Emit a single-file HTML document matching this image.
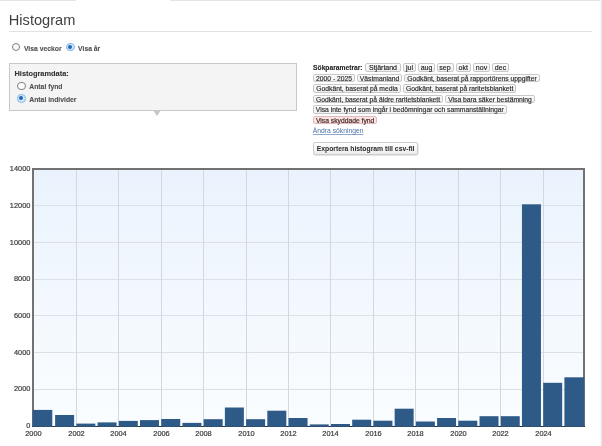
<!DOCTYPE html>
<html><head><meta charset="utf-8">
<style>
html,body{margin:0;padding:0;background:#fff;width:602px;height:446px;overflow:hidden;}
body{position:relative;will-change:transform;font-family:"Liberation Sans",sans-serif;}
.topl{position:absolute;top:0;height:1px;background:#e4e4e4;}
.rline{position:absolute;left:600px;top:0;width:2px;height:446px;background:linear-gradient(90deg,#f8f8f8 50%,#e8e8e8 50%);}
h1{position:absolute;left:8.8px;top:10.6px;margin:0;font-weight:normal;font-size:14.6px;color:#404040;line-height:18px;}
.hr{position:absolute;left:9px;top:31px;width:583px;height:1px;background:#e2e2e2;}
.radio{position:absolute;width:8.6px;height:8.6px;box-sizing:border-box;border:1.2px solid #7e7e7e;border-radius:50%;background:#fbfdff;}
.radio.on{border-color:#86b6e4;background:#d2e8fa;}
.radio.on::after{content:"";position:absolute;left:1px;top:1px;width:4.4px;height:4.4px;border-radius:50%;background:#1f66b3;}
.lbl{position:absolute;font-size:6.8px;font-weight:bold;color:#505050;line-height:8px;white-space:nowrap;-webkit-text-stroke:0.1px currentColor;}
.box{position:absolute;left:9px;top:63px;width:288px;height:48px;box-sizing:border-box;background:#f4f4f4;border:1px solid #c8c8c8;}
.arrow{position:absolute;left:152.8px;top:110.4px;width:0;height:0;border-left:4.8px solid transparent;border-right:4.8px solid transparent;border-top:6px solid #c6c6c6;}
.tag{position:absolute;box-sizing:border-box;font-size:6.75px;color:#2a2a2a;line-height:7px;border:1px solid #c8c8c8;border-radius:2px;background:linear-gradient(#fcfcfc,#f0f0f0);white-space:nowrap;text-align:center;-webkit-text-stroke:0.15px #2a2a2a;}
.r1{top:62.6px;height:9.1px;color:#1a1a1a;font-size:7px;}
.r2{top:73.7px;height:8.7px;}
.r3{top:83.9px;height:9.1px;}
.r4{top:94.5px;height:8.8px;}
.r5{top:105.3px;height:8.7px;}
.r6{top:115.9px;height:8px;}
.tag.pink{background:#fbe3e3;border-color:#e2b9b9;color:#3a1c1c;-webkit-text-stroke:0.15px #3a1c1c;}
.link{position:absolute;left:312.8px;top:127px;font-size:6.75px;color:#4d72aa;text-decoration:underline;text-decoration-color:#8ea9d0;text-decoration-thickness:0.7px;text-underline-offset:0.8px;white-space:nowrap;line-height:8px;}
.btn{position:absolute;left:313px;top:142.3px;width:105.2px;height:12.4px;box-sizing:border-box;border:1px solid #cdcdcd;border-radius:2px;background:linear-gradient(#ffffff,#ececec);box-shadow:0.4px 0.6px 0.6px rgba(0,0,0,0.2);font-size:6.8px;font-weight:bold;color:#2a2a2a;line-height:11.8px;text-align:center;white-space:nowrap;}
svg.chart{position:absolute;left:0;top:0;}
svg.chart text{font-family:"Liberation Sans",sans-serif;font-size:7.4px;fill:#3a3a3a;stroke:#3a3a3a;stroke-width:0.2px;}
</style></head><body>
<div class="topl" style="left:0;width:76px"></div>
<div class="topl" style="left:170px;width:431px"></div>
<div class="rline"></div>
<h1>Histogram</h1>
<div class="hr"></div>

<div class="radio" style="left:11.6px;top:42.5px"></div>
<div class="lbl" style="left:23.9px;top:44.5px">Visa veckor</div>
<div class="radio on" style="left:66.1px;top:42.5px"></div>
<div class="lbl" style="left:78.1px;top:44.5px">Visa år</div>

<div class="box"></div>
<div class="arrow"></div>
<div class="lbl" style="left:14.5px;top:70px;color:#333;font-size:7.4px">Histogramdata:</div>
<div class="radio" style="left:17px;top:81.5px"></div>
<div class="lbl" style="left:29.3px;top:83px">Antal fynd</div>
<div class="radio on" style="left:17px;top:94px"></div>
<div class="lbl" style="left:29.3px;top:95.5px">Antal individer</div>

<div class="lbl" style="left:313.1px;top:63.6px;color:#222;font-size:6.7px">Sökparametrar:</div>
<div class="tag r1" style="left:365px;width:36px">Stjärtand</div>
<div class="tag r1" style="left:403px;width:13px">jul</div>
<div class="tag r1" style="left:418px;width:17px">aug</div>
<div class="tag r1" style="left:436.5px;width:17px">sep</div>
<div class="tag r1" style="left:455.5px;width:15.5px">okt</div>
<div class="tag r1" style="left:473px;width:17px">nov</div>
<div class="tag r1" style="left:492px;width:17px">dec</div>

<div class="tag r2" style="left:313px;width:42px">2000 - 2025</div>
<div class="tag r2" style="left:357px;width:45px">Västmanland</div>
<div class="tag r2" style="left:404px;width:136px">Godkänt, baserat på rapportörens uppgifter</div>

<div class="tag r3" style="left:313px;width:88px">Godkänt, baserat på media</div>
<div class="tag r3" style="left:403.2px;width:113px">Godkänt, baserat på raritetsblankett</div>

<div class="tag r4" style="left:313px;width:130px">Godkänt, baserat på äldre raritetsblankett</div>
<div class="tag r4" style="left:445px;width:90px">Visa bara säker bestämning</div>

<div class="tag r5" style="left:313px;width:193.5px">Visa inte fynd som ingår i bedömningar och sammanställningar</div>
<div class="tag r6 pink" style="left:312.8px;width:64.6px">Visa skyddade fynd</div>
<div class="link">Ändra sökningen</div>
<div class="btn">Exportera histogram till csv-fil</div>
<svg class="chart" width="602" height="446" viewBox="0 0 602 446"><defs><linearGradient id="bg" x1="0" y1="0" x2="0" y2="1"><stop offset="0" stop-color="#eaf3fd"/><stop offset="1" stop-color="#fafdff"/></linearGradient></defs><rect x="33" y="169" width="551" height="257.5" fill="url(#bg)"/><line x1="34" y1="389.5" x2="583" y2="389.5" stroke="#dde1e7" stroke-width="1"/><line x1="34" y1="352.5" x2="583" y2="352.5" stroke="#dde1e7" stroke-width="1"/><line x1="34" y1="315.5" x2="583" y2="315.5" stroke="#dde1e7" stroke-width="1"/><line x1="34" y1="279.5" x2="583" y2="279.5" stroke="#dde1e7" stroke-width="1"/><line x1="34" y1="242.5" x2="583" y2="242.5" stroke="#dde1e7" stroke-width="1"/><line x1="34" y1="205.5" x2="583" y2="205.5" stroke="#dde1e7" stroke-width="1"/><line x1="76.5" y1="170" x2="76.5" y2="426" stroke="#d3d7de" stroke-width="1"/><line x1="118.5" y1="170" x2="118.5" y2="426" stroke="#d3d7de" stroke-width="1"/><line x1="161.5" y1="170" x2="161.5" y2="426" stroke="#d3d7de" stroke-width="1"/><line x1="203.5" y1="170" x2="203.5" y2="426" stroke="#d3d7de" stroke-width="1"/><line x1="246.5" y1="170" x2="246.5" y2="426" stroke="#d3d7de" stroke-width="1"/><line x1="288.5" y1="170" x2="288.5" y2="426" stroke="#d3d7de" stroke-width="1"/><line x1="330.5" y1="170" x2="330.5" y2="426" stroke="#d3d7de" stroke-width="1"/><line x1="373.5" y1="170" x2="373.5" y2="426" stroke="#d3d7de" stroke-width="1"/><line x1="415.5" y1="170" x2="415.5" y2="426" stroke="#d3d7de" stroke-width="1"/><line x1="458.5" y1="170" x2="458.5" y2="426" stroke="#d3d7de" stroke-width="1"/><line x1="500.5" y1="170" x2="500.5" y2="426" stroke="#d3d7de" stroke-width="1"/><line x1="543.5" y1="170" x2="543.5" y2="426" stroke="#d3d7de" stroke-width="1"/><path d="M33,426 L33,169 L584,169 L584,426" fill="none" stroke="#727272" stroke-width="2"/><line x1="32" y1="426.5" x2="585" y2="426.5" stroke="#2a2f36" stroke-width="1"/><rect x="32.60" y="409.9" width="19.70" height="16.90" fill="#2e5a88"/><rect x="55.12" y="415.0" width="19.00" height="11.80" fill="#2e5a88"/><rect x="76.34" y="423.6" width="19.00" height="3.20" fill="#2e5a88"/><rect x="97.56" y="422.4" width="19.00" height="4.40" fill="#2e5a88"/><rect x="118.78" y="420.9" width="19.00" height="5.90" fill="#2e5a88"/><rect x="140.00" y="420.1" width="19.00" height="6.70" fill="#2e5a88"/><rect x="161.22" y="419.0" width="19.00" height="7.80" fill="#2e5a88"/><rect x="182.44" y="422.9" width="19.00" height="3.90" fill="#2e5a88"/><rect x="203.66" y="419.2" width="19.00" height="7.60" fill="#2e5a88"/><rect x="224.88" y="407.5" width="19.00" height="19.30" fill="#2e5a88"/><rect x="246.10" y="419.2" width="19.00" height="7.60" fill="#2e5a88"/><rect x="267.32" y="410.7" width="19.00" height="16.10" fill="#2e5a88"/><rect x="288.54" y="418.0" width="19.00" height="8.80" fill="#2e5a88"/><rect x="309.76" y="424.40000000000003" width="19.00" height="2.40" fill="#2e5a88"/><rect x="330.98" y="424.0" width="19.00" height="2.80" fill="#2e5a88"/><rect x="352.20" y="419.7" width="19.00" height="7.10" fill="#2e5a88"/><rect x="373.42" y="420.7" width="19.00" height="6.10" fill="#2e5a88"/><rect x="394.64" y="408.7" width="19.00" height="18.10" fill="#2e5a88"/><rect x="415.86" y="421.5" width="19.00" height="5.30" fill="#2e5a88"/><rect x="437.08" y="418.0" width="19.00" height="8.80" fill="#2e5a88"/><rect x="458.30" y="420.7" width="19.00" height="6.10" fill="#2e5a88"/><rect x="479.52" y="416.2" width="19.00" height="10.60" fill="#2e5a88"/><rect x="500.74" y="416.2" width="19.00" height="10.60" fill="#2e5a88"/><rect x="521.96" y="204.3" width="19.00" height="222.50" fill="#2e5a88"/><rect x="543.18" y="382.8" width="19.00" height="44.00" fill="#2e5a88"/><rect x="564.40" y="377.3" width="19.80" height="49.50" fill="#2e5a88"/><text x="30.4" y="427.82" text-anchor="end">0</text><text x="30.4" y="391.20" text-anchor="end">2000</text><text x="30.4" y="354.58" text-anchor="end">4000</text><text x="30.4" y="317.96" text-anchor="end">6000</text><text x="30.4" y="281.34" text-anchor="end">8000</text><text x="30.4" y="244.72" text-anchor="end">10000</text><text x="30.4" y="208.10" text-anchor="end">12000</text><text x="30.4" y="171.48" text-anchor="end">14000</text><text x="33.40" y="435.8" text-anchor="middle">2000</text><text x="76.50" y="435.8" text-anchor="middle">2002</text><text x="118.50" y="435.8" text-anchor="middle">2004</text><text x="161.50" y="435.8" text-anchor="middle">2006</text><text x="203.50" y="435.8" text-anchor="middle">2008</text><text x="246.50" y="435.8" text-anchor="middle">2010</text><text x="288.50" y="435.8" text-anchor="middle">2012</text><text x="330.50" y="435.8" text-anchor="middle">2014</text><text x="373.50" y="435.8" text-anchor="middle">2016</text><text x="415.50" y="435.8" text-anchor="middle">2018</text><text x="458.50" y="435.8" text-anchor="middle">2020</text><text x="500.50" y="435.8" text-anchor="middle">2022</text><text x="543.50" y="435.8" text-anchor="middle">2024</text></svg>
</body></html>
